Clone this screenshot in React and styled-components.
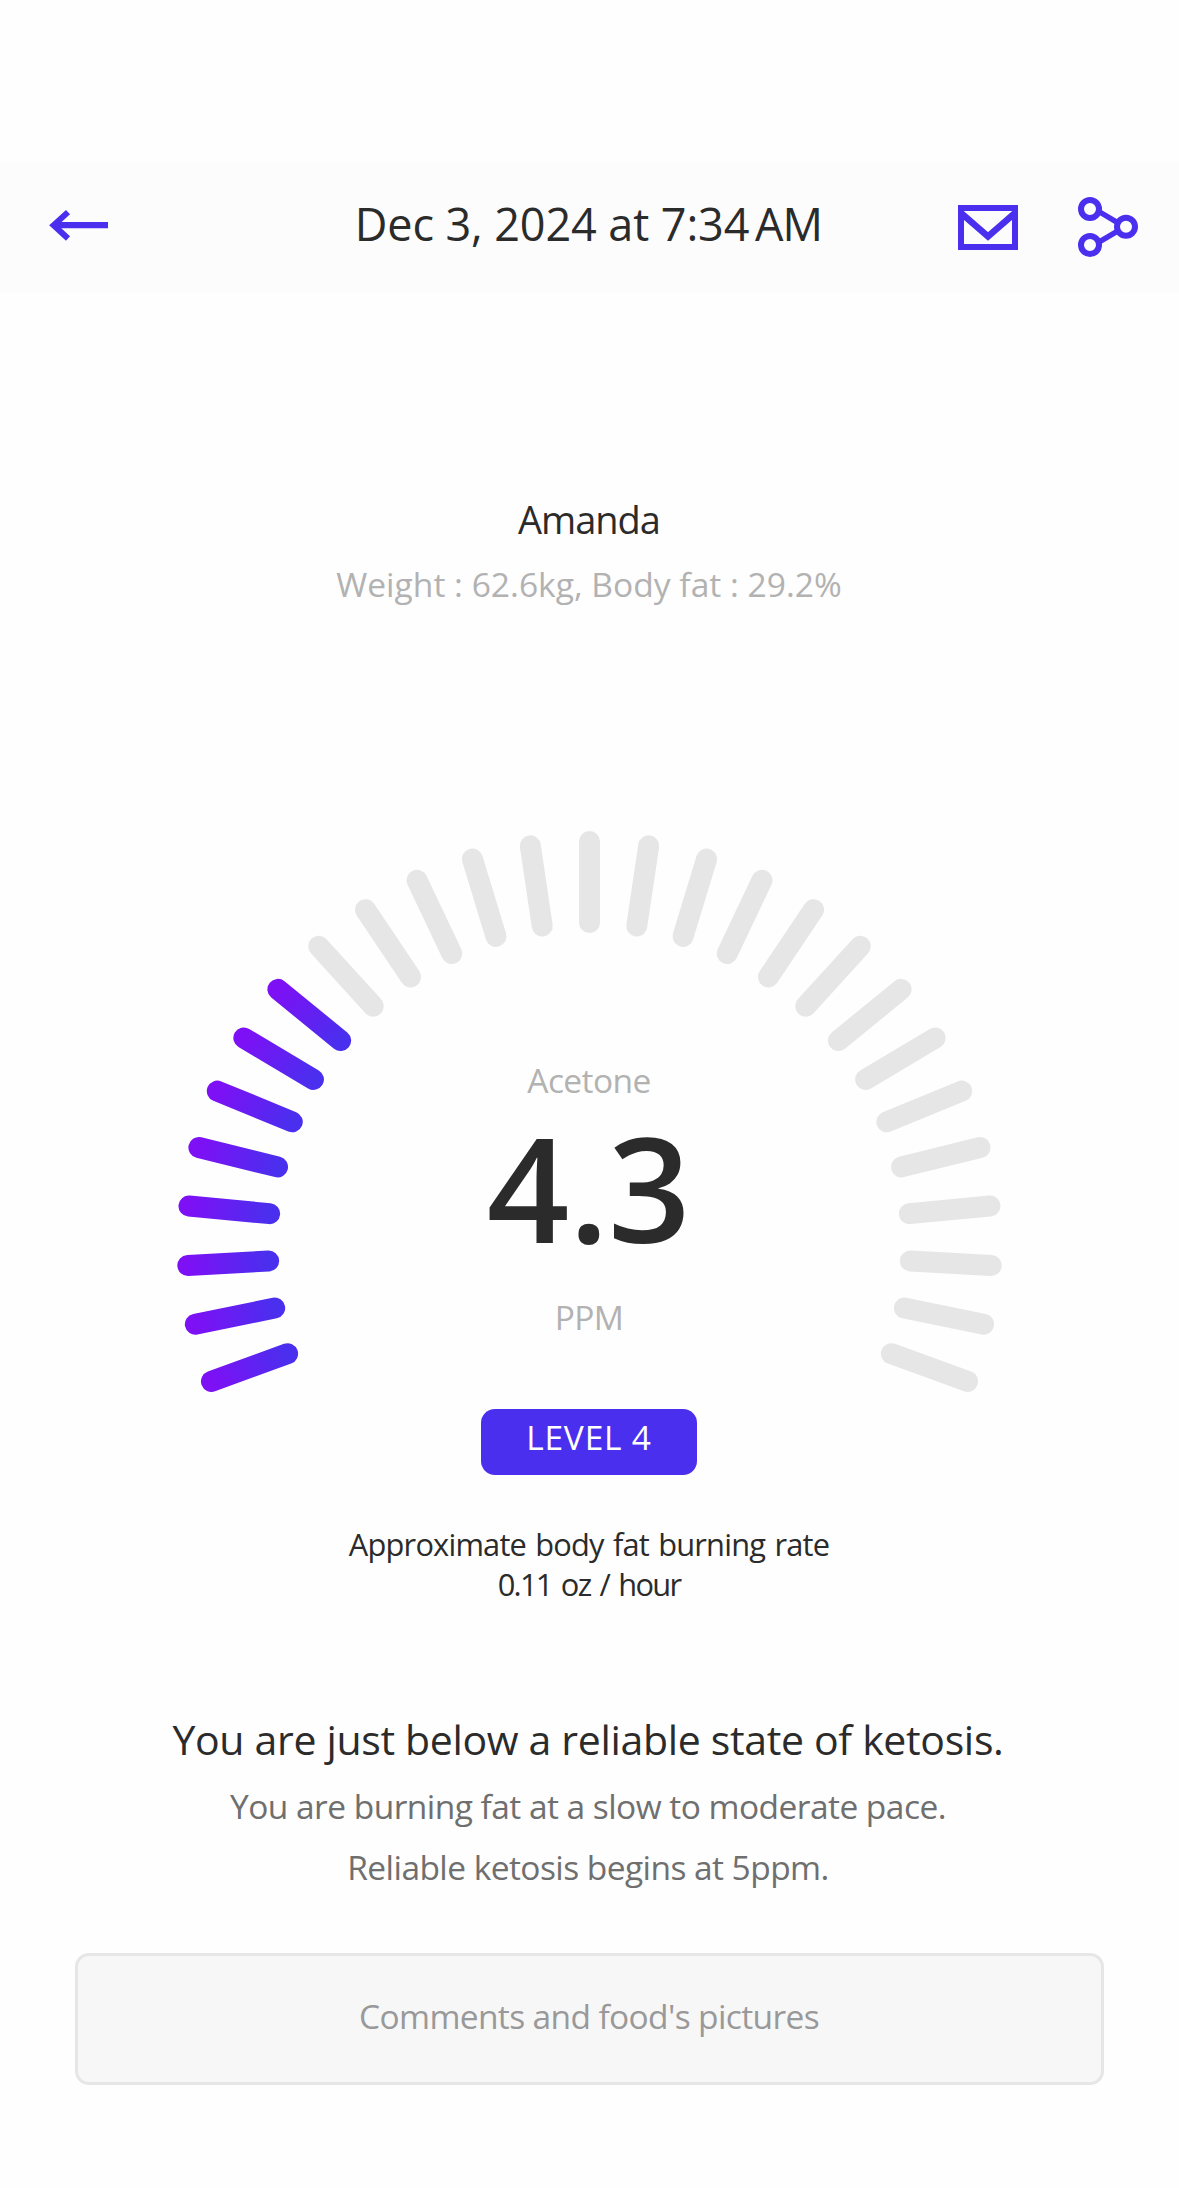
import React from "react";
import styled, { createGlobalStyle } from "styled-components";

const ACCENT = "#4a2fee";
const INK = "#2b2b2b";

const GlobalStyle = createGlobalStyle`
  body {
    margin: 0;
    background: #fefefe;
    font-family: "Open Sans", "Noto Sans", sans-serif;
  }
`;

const Screen = styled.div`
  display: flex;
  flex-direction: column;
  align-items: center;
  box-sizing: border-box;
  width: 1179px;
  height: 2188px;
  padding-top: 162px;
  background: #fefefe;
  overflow: hidden;
`;

const Header = styled.header`
  display: grid;
  grid-template-columns: 1fr auto 1fr;
  align-items: center;
  flex: none;
  width: 100%;
  height: 131px;
  background: #fcfcfc;
`;

const Title = styled.h1`
  margin: 0 2px 0 0;
  padding-bottom: 8px;
  font-size: 45px;
  font-weight: 400;
  line-height: 60px;
  letter-spacing: -0.1px;
  color: ${INK};
  white-space: nowrap;
`;

const Meridiem = styled.span`
  margin-left: -6px;
  letter-spacing: -0.8px;
`;

const IconButton = styled.button`
  display: flex;
  padding: 0;
  border: 0;
  background: none;
  color: ${ACCENT};
`;

const BackButton = styled(IconButton)`
  margin-left: 49px;
`;

const Actions = styled.div`
  display: flex;
  align-items: center;
  justify-content: flex-end;
  gap: 60px;
  margin-right: 41px;
`;

const Text = styled.div`
  font-size: ${(p) => p.$size}px;
  font-weight: ${(p) => p.$weight || 400};
  line-height: ${(p) => p.$line || 50}px;
  letter-spacing: ${(p) => p.$spacing || 0}px;
  word-spacing: ${(p) => p.$words || 0}px;
  color: ${(p) => p.$color || INK};
  text-align: center;
  white-space: nowrap;
`;

const Profile = styled.section`
  display: flex;
  flex-direction: column;
  gap: 15px;
  margin: 201px 1px 0 0;
`;

const Gauge = styled.section`
  display: grid;
  justify-items: center;
  width: 829px;
  height: 561px;
  margin-top: 222px;

  > * {
    grid-area: 1 / 1;
  }
`;

const Readout = styled.div`
  display: flex;
  flex-direction: column;
  align-items: center;
  padding: 224px 1px 0 0;
`;

const Value = styled.div`
  margin: 7px 1px 30px 0;
  font-size: 144.5px;
  font-weight: 600;
  line-height: 150px;
  letter-spacing: -0.4px;
  color: ${INK};
`;

const Badge = styled.div`
  box-sizing: border-box;
  width: 216px;
  height: 66px;
  margin: 17px 1px 0 0;
  padding-top: 3px;
  border-radius: 14px;
  background: ${ACCENT};
`;

const Rate = styled.section`
  margin: 49px 1px 0 0;
`;

const Verdict = styled.section`
  display: flex;
  flex-direction: column;
  gap: 7px;
  margin: 105px 3px 0 0;
`;

const Comments = styled.button`
  display: flex;
  align-items: center;
  justify-content: center;
  box-sizing: border-box;
  width: 1029px;
  height: 132px;
  margin-top: 55px;
  padding: 0 1px 6px 0;
  border: 3px solid #e6e6e6;
  border-radius: 14px;
  background: #f7f7f7;
  font-family: inherit;
`;

const BackIcon = () => (
  <svg width="60" height="61" viewBox="0 0 60 61" fill="none" stroke="currentColor">
    <path d="M19 15.1L4.6 28.3L19 41.5" strokeWidth="6" />
    <path d="M7 28.2H59" strokeWidth="6.3" />
  </svg>
);

const MailIcon = () => (
  <svg width="60" height="45" viewBox="0 0 60 45" fill="none" stroke="currentColor">
    <rect x="3" y="3" width="54" height="39" strokeWidth="6" />
    <path d="M3 8L30 31.4L57 8" strokeWidth="6.5" />
  </svg>
);

const ShareIcon = () => (
  <svg width="60" height="61" viewBox="0 0 60 61" fill="none" stroke="currentColor" strokeWidth="6">
    <path d="M20 14L40 25.8M20 45.6L40 33.8" strokeWidth="5.4" />
    <circle cx="12" cy="12" r="9" />
    <circle cx="12" cy="48" r="9" />
    <circle cx="48" cy="29.8" r="9" />
  </svg>
);

const TICKS = 27;
const ACTIVE = 8;
const SWEEP = 220;
const OUTER = 402.3;
const INNER = 321.3;
const CENTER = { x: 414.5, y: 412.8 };

const ticks = Array.from({ length: TICKS }, (_, i) => {
  const angle = ((-200 + (SWEEP / (TICKS - 1)) * i) * Math.PI) / 180;
  const at = (r) => [CENTER.x + r * Math.cos(angle), CENTER.y + r * Math.sin(angle)];
  const [x1, y1] = at(OUTER);
  const [x2, y2] = at(INNER);
  return { x1, y1, x2, y2 };
});

const Dial = () => (
  <svg width="829" height="561" viewBox="0 0 829 561" strokeWidth="21" strokeLinecap="round">
    <defs>
      {ticks.slice(0, ACTIVE).map((t, i) => (
        <linearGradient key={i} id={`tick-${i}`} gradientUnits="userSpaceOnUse" {...t}>
          <stop offset="0" stopColor="#7d10f5" />
          <stop offset="1" stopColor={ACCENT} />
        </linearGradient>
      ))}
    </defs>
    {ticks.map((t, i) => (
      <line key={i} {...t} stroke={i < ACTIVE ? `url(#tick-${i})` : "#e6e6e6"} />
    ))}
  </svg>
);

export default function App() {
  return (
    <>
      <GlobalStyle />
      <Screen>
        <Header>
          <BackButton aria-label="Back">
            <BackIcon />
          </BackButton>
          <Title>
            Dec 3, 2024 at 7:34 <Meridiem>AM</Meridiem>
          </Title>
          <Actions>
            <IconButton aria-label="Mail">
              <MailIcon />
            </IconButton>
            <IconButton aria-label="Share">
              <ShareIcon />
            </IconButton>
          </Actions>
        </Header>

        <Profile>
          <Text $size={38} $spacing={-1}>Amanda</Text>
          <Text $size={33.6} $color="#b2b2b2">Weight : 62.6kg, Body fat : 29.2%</Text>
        </Profile>

        <Gauge>
          <Dial />
          <Readout>
            <Text $size={33.5} $spacing={-0.6} $color="#b2b2b2">Acetone</Text>
            <Value>4.3</Value>
            <Text $size={33.5} $spacing={-0.7} $color="#b2b2b2">PPM</Text>
          </Readout>
        </Gauge>

        <Badge>
          <Text $size={33.5} $spacing={0.8} $color="#ffffff">LEVEL 4</Text>
        </Badge>

        <Rate>
          <Text $size={30.8} $line={40} $spacing={-0.8} $words={2}>
            Approximate body fat burning rate
          </Text>
          <Text $size={30.8} $line={40} $spacing={-1.7} $words={2.8}>
            0.11 oz / hour
          </Text>
        </Rate>

        <Verdict>
          <Text $size={41} $line={60} $spacing={-0.33}>You are just below a reliable state of ketosis.</Text>
          <div>
            <Text $size={33.5} $line={61} $spacing={-0.54} $color="#6f6f6f">
              You are burning fat at a slow to moderate pace.
            </Text>
            <Text $size={33.5} $line={61} $spacing={-0.56} $color="#6f6f6f">
              Reliable ketosis begins at 5ppm.
            </Text>
          </div>
        </Verdict>

        <Comments>
          <Text $size={33.5} $spacing={-0.63} $color="#999999">Comments and food's pictures</Text>
        </Comments>
      </Screen>
    </>
  );
}
